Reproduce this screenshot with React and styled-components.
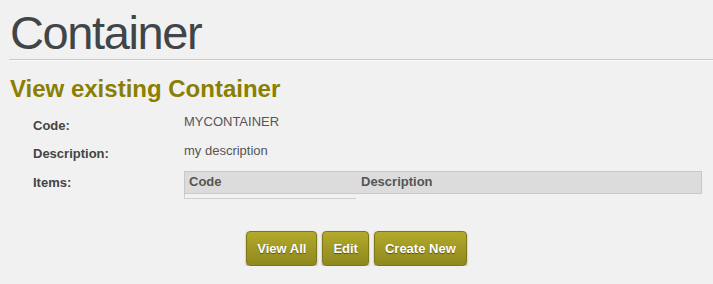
import React from "react";
import styled, { createGlobalStyle } from "styled-components";

const GlobalStyle = createGlobalStyle`
  html, body {
    margin: 0;
    padding: 0;
    background: #f1f1f1;
    font-family: "Liberation Sans", Arial, sans-serif;
  }
`;

const Page = styled.div`
  padding: 0 0 0 10px;
`;

const Title = styled.h1`
  margin: 0;
  padding-top: 9px;
  font-size: 47px;
  line-height: 47px;
  font-weight: normal;
  letter-spacing: -1.4px;
  color: #3f4548;
`;

const Rule = styled.hr`
  margin: 3px 0 0 -1px;
  border: 0;
  border-top: 1px solid #c9c9c9;
  border-bottom: 1px solid #fafafa;
`;

const Subtitle = styled.h2`
  margin: 14px 0 0;
  font-size: 24px;
  line-height: 28px;
  font-weight: bold;
  color: #8a7f00;
`;

const Details = styled.div`
  margin: 11px 0 0 23px;
`;

const Row = styled.div`
  display: grid;
  grid-template-columns: 151px 518px;
  align-items: start;
  height: ${(p) => p.$h || "28.5px"};
`;

const Label = styled.div`
  padding-top: 3.5px;
  font-size: 13px;
  line-height: 16px;
  font-weight: bold;
  color: #444;
`;

const Value = styled.div`
  font-size: 13px;
  line-height: 16px;
  color: #555;
`;

const Table = styled.div`
  font-size: 13px;
  color: #555;
`;

const HeadRow = styled.div`
  display: grid;
  grid-template-columns: 172px 1fr;
  height: 21px;
  background: #dcdcdc;
  border: 1px solid #c8c8c8;
`;

const HeadCell = styled.div`
  padding: 2px 0 0 4px;
  line-height: 16px;
  font-weight: bold;
`;

const EmptyCell = styled.div`
  width: 171px;
  height: 4px;
  border-left: 1px solid #cfcfcf;
  border-bottom: 1px solid #cfcfcf;
`;

const Actions = styled.div`
  display: flex;
  justify-content: center;
  gap: 5px;
  margin: 32px 0 0 -10px;
`;

const Button = styled.button`
  height: 35px;
  padding: 0 10px;
  border: 1px solid #7f7715;
  border-radius: 4px;
  background: linear-gradient(#b3a92b, #8f881e);
  box-shadow: 0 1px 2px rgba(0, 0, 0, 0.35);
  color: #fff;
  font-family: "Liberation Sans", Arial, sans-serif;
  font-size: 13px;
  font-weight: bold;
  text-shadow: 0 1px 1px rgba(0, 0, 0, 0.45);
  cursor: pointer;
`;

export default function App() {
  return (
    <Page>
      <GlobalStyle />
      <Title>Container</Title>
      <Rule />
      <Subtitle>View existing Container</Subtitle>
      <Details>
        <Row>
          <Label>Code:</Label>
          <Value>MYCONTAINER</Value>
        </Row>
        <Row>
          <Label>Description:</Label>
          <Value>my description</Value>
        </Row>
        <Row $h="auto">
          <Label>Items:</Label>
          <Table>
            <HeadRow>
              <HeadCell>Code</HeadCell>
              <HeadCell>Description</HeadCell>
            </HeadRow>
            <EmptyCell />
          </Table>
        </Row>
      </Details>
      <Actions>
        <Button>View All</Button>
        <Button>Edit</Button>
        <Button>Create New</Button>
      </Actions>
    </Page>
  );
}
